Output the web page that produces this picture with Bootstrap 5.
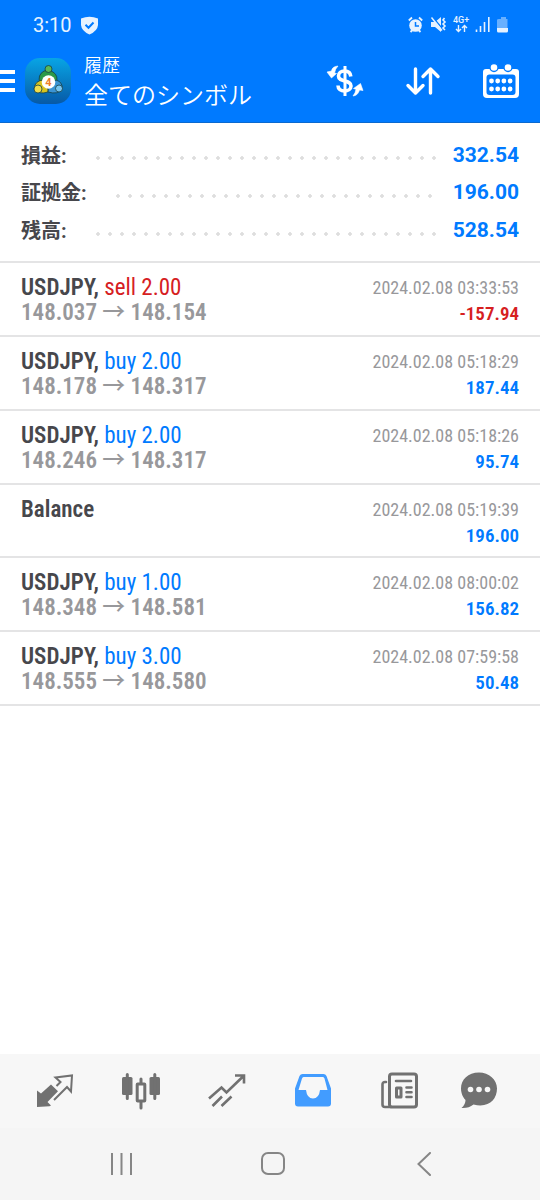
<!DOCTYPE html>
<html lang="ja">
<head>
<meta charset="utf-8">
<meta name="viewport" content="width=device-width, initial-scale=1">
<title>履歴</title>
<link href="https://cdn.jsdelivr.net/npm/bootstrap@5.3.0/dist/css/bootstrap.min.css" rel="stylesheet">
<style>
:root { --brand: #007aff; --ink: #47474c; --muted: #98989b; --rule: #e4e4e5; --loss: #d6201f; }
body { font-family: Roboto, "Noto Sans CJK JP", sans-serif; color: var(--ink); background: #fff; }
svg { display: block; }
.top-area { background: var(--brand); border-bottom: 1px solid #0b69cf; }
.status-row { height: 48px; padding: 2px 32px 0 33px; font-size: 20px; color: #e6f2ff; }
.app-row { height: 74px; padding-bottom: 8px; }
.app-row button, .tab-row a, .system-row button { background: none; border: 0; padding: 0; }
.title-block { padding: 4px 0 0 11px; font-weight: 350; }
.title-small { font-size: 18px; line-height: 26px; }
.title-large { font-size: 24px; line-height: 34px; }
.tool-button { width: 78px; height: 66px; }
.summary-box { padding: 14px 21px 11px; border-bottom: 2px solid var(--rule); }
.summary-line { height: 37px; font-size: 20px; font-weight: 700; }
.summary-line + .summary-line { height: 38px; }
.leader-dots { height: 4px; margin: 5px 15px 0 29px; background: radial-gradient(circle at 2px 2px, #dedede 1px, #e6e6e6 2px, transparent 2px) 0 0 / 12px 4px repeat-x; }
.summary-value { color: var(--brand); font-size: 21px; }
.deal-row { height: 74px; padding: 12px 21px 8px; border-bottom: 2px solid var(--rule); font-family: "Roboto Condensed", "Noto Sans CJK JP", sans-serif; }
.balance-row { height: 73px; }
.deal-title { font-size: 23px; line-height: 25px; font-weight: 600; }
.deal-title span { font-weight: 400; }
.deal-price { font-size: 23px; line-height: 25px; font-weight: 600; color: var(--muted); }
.deal-price span { font-weight: 500; line-height: 1; }
.deal-time { font-size: 18px; line-height: 26px; color: var(--muted); }
.deal-amount { font-size: 19px; line-height: 26px; font-weight: 600; }
.is-buy { color: var(--brand); }
.is-sell { color: var(--loss); }
.tab-row { height: 74px; padding: 0 24px 0 12px; background: #f7f7f7; color: #717171; }
.tab-row a { flex: 86 1 0; color: inherit; }
.tab-row a:last-child { flex-grow: 74; }
.tab-row a.active { color: #429cff; }
.system-row { height: 72px; background: #f5f5f5; color: #868686; padding: 0 40px 0 46px; }
.system-row button { color: inherit; flex: 1 1 0; }
</style>
</head>
<body>
<div class="d-flex flex-column min-vh-100">
<header class="top-area text-white">
  <div class="status-row d-flex align-items-center justify-content-between">
    <div class="d-flex align-items-center gap-2">
      <span>3:10</span>
      <svg width="19" height="19" viewBox="0 0 19 19"><path d="M1 2.500Q9.500-.8 18 2.500V9Q17.500 15 9.500 18.500 1.500 15 1 9Z" fill="#e6f2ff"/><path d="M5.500 8.800l3 3 5-5.300" fill="none" stroke="#007aff" stroke-width="2"/></svg>
    </div>
    <svg width="100" height="18" viewBox="0 0 100 18" fill="#e6f2ff" stroke="none">
      <circle cx="7.500" cy="9.500" r="6.300"/><path d="M7.500 6v4h3.500" fill="none" stroke="#007aff" stroke-width="1.500"/><path d="M.8 4.500L4 1.500M14.200 4.500L11 1.500M2.500 16l2-2M12.500 16l-2-2" stroke="#e6f2ff" stroke-width="1.800"/>
      <path d="M23 6h4l6-5v15l-6-5h-4z"/><path d="M24.500 1l11 13" stroke="#007aff" stroke-width="1.500"/><path d="M23.500 1.500l10.500 13" stroke="#e6f2ff" stroke-width="1.500"/><path d="M36.500 2l-1.500 2 2 2-2 2 2 2-2 2 2 2" fill="none" stroke="#e6f2ff" stroke-width="1.600"/>
      <text x="45" y="7" font-size="9" font-weight="500">4G+</text>
      <path d="M50.500 9v6.500M48 13l2.500 2.500L53 13M56.500 16V9.500M54 12l2.500-2.500L59 12" fill="none" stroke="#e6f2ff" stroke-width="1.400"/>
      <path d="M68.500 13.500v2.500M72.500 10v6M76.500 6v10M80.800 1v15" stroke="#e6f2ff" stroke-width="1.600"/>
      <path d="M91 3h2V1h5v2h1.500v10H89V4q0-1 2-1z" opacity=".45"/><path d="M89 12h11v3q0 1.500-1.500 1.500h-8Q89 16.500 89 15z"/>
    </svg>
  </div>
  <div class="app-row d-flex align-items-center">
    <button type="button" aria-label="メニュー" class="text-white"><svg width="15" height="22" viewBox="0 0 15 22"><path d="M0 2h15M0 11h15M0 20h15" stroke="currentColor" stroke-width="4"/></svg></button>
    <svg class="ms-2" width="50" height="50" viewBox="0 0 50 50">
      <defs><linearGradient id="tile" x2="0" y2="1"><stop stop-color="#08a5e5"/><stop offset="1" stop-color="#0759a6"/></linearGradient></defs>
      <rect x="2" y="2" width="46" height="46" rx="15" fill="url(#tile)"/>
      <g stroke="#173f45" stroke-width=".8"><path d="M17 27q-3-8 4-12 5-2 9 1 6 4 3 11z" fill="#2c9a49"/><circle cx="25.500" cy="13" r="3.500" fill="#5ab957"/><path d="M11 33q1-9 10-9 5 9 4 12-9 3-14-3z" fill="#d6c31f"/><circle cx="15" cy="33" r="4" fill="#f1dc4a"/><path d="M25 36q0-9 8-12 7 2 6 9-4 6-14 3z" fill="#3b94d4"/><circle cx="36" cy="32.500" r="3.500" fill="#79c5ef"/></g>
      <circle cx="25.500" cy="26" r="6.800" fill="#fff"/><text x="25.500" y="30" font-size="11" font-weight="700" text-anchor="middle" fill="#ee7d29">4</text>
    </svg>
    <div class="title-block flex-grow-1 text-nowrap"><div class="title-small">履歴</div><div class="title-large">全てのシンボル</div></div>
    <button type="button" aria-label="通貨" class="tool-button d-flex justify-content-center align-items-center text-white">
      <svg width="38" height="32" viewBox="0 0 38 32" fill="none" stroke="currentColor"><path d="M19 1v30" stroke-width="3"/><path d="M24.800 11.500C24.500 7.500 21.500 6 18.500 6 15 6 12.500 8 12.500 11c0 7 12.500 3 12.500 10 0 3-3 5-6.500 5s-6.500-2-6.500-5.500" stroke-width="3.600"/><path d="M12 1Q6 1.500 5.500 6L1 7 5.500 13 10.500 8.500 8.500 8Q9 4 12 1zM27 31q5-.5 6.500-6l3.500.5-2.500-7-7 5 2.500.8q-.5 3.500-3 6.700z" fill="currentColor" stroke-width=".6"/></svg>
    </button>
    <button type="button" aria-label="並べ替え" class="tool-button d-flex justify-content-center align-items-center text-white">
      <svg width="36" height="30" viewBox="0 0 36 30" fill="none" stroke="currentColor" stroke-width="3.400" stroke-linecap="round" stroke-linejoin="round"><path d="M10.500 3v24M3 19.500l7.500 7.500 7.500-7.500M25.500 27V3M18 10.500L25.500 3l7.500 7.500"/></svg>
    </button>
    <button type="button" aria-label="期間" class="tool-button d-flex justify-content-center align-items-center text-white">
      <svg width="36" height="36" viewBox="0 0 36 36"><path d="M3 6h30q3 0 3 3v22q0 4-4 4H4q-4 0-4-4V9q0-3 3-3z" fill="currentColor"/><rect x="3.500" y="11.500" width="29" height="20.500" rx="3" fill="#007aff"/><g fill="currentColor" stroke="#007aff" stroke-width="1.400"><circle cx="11" cy="4.500" r="4"/><circle cx="25" cy="4.500" r="4"/></g><path d="M8.500 18h20M8.500 26h20" stroke="currentColor" stroke-width="4.800" stroke-linecap="round" stroke-dasharray="0 6.200"/></svg>
    </button>
  </div>
</header>

<main>
  <section class="summary-box">
    <div class="summary-line d-flex align-items-center"><span>損益:</span><span class="leader-dots flex-grow-1"></span><span class="summary-value">332.54</span></div>
    <div class="summary-line d-flex align-items-center"><span>証拠金:</span><span class="leader-dots flex-grow-1"></span><span class="summary-value">196.00</span></div>
    <div class="summary-line d-flex align-items-center"><span>残高:</span><span class="leader-dots flex-grow-1"></span><span class="summary-value">528.54</span></div>
  </section>
  <ul class="list-unstyled mb-0">
    <li class="deal-row d-flex justify-content-between"><div><div class="deal-title">USDJPY, <span class="is-sell">sell 2.00</span></div><div class="deal-price">148.037 <span>→</span> 148.154</div></div><div class="text-end"><div class="deal-time">2024.02.08 03:33:53</div><div class="deal-amount is-sell">-157.94</div></div></li>
    <li class="deal-row d-flex justify-content-between"><div><div class="deal-title">USDJPY, <span class="is-buy">buy 2.00</span></div><div class="deal-price">148.178 <span>→</span> 148.317</div></div><div class="text-end"><div class="deal-time">2024.02.08 05:18:29</div><div class="deal-amount is-buy">187.44</div></div></li>
    <li class="deal-row d-flex justify-content-between"><div><div class="deal-title">USDJPY, <span class="is-buy">buy 2.00</span></div><div class="deal-price">148.246 <span>→</span> 148.317</div></div><div class="text-end"><div class="deal-time">2024.02.08 05:18:26</div><div class="deal-amount is-buy">95.74</div></div></li>
    <li class="deal-row balance-row d-flex justify-content-between"><div class="deal-title">Balance</div><div class="text-end"><div class="deal-time">2024.02.08 05:19:39</div><div class="deal-amount is-buy">196.00</div></div></li>
    <li class="deal-row d-flex justify-content-between"><div><div class="deal-title">USDJPY, <span class="is-buy">buy 1.00</span></div><div class="deal-price">148.348 <span>→</span> 148.581</div></div><div class="text-end"><div class="deal-time">2024.02.08 08:00:02</div><div class="deal-amount is-buy">156.82</div></div></li>
    <li class="deal-row d-flex justify-content-between"><div><div class="deal-title">USDJPY, <span class="is-buy">buy 3.00</span></div><div class="deal-price">148.555 <span>→</span> 148.580</div></div><div class="text-end"><div class="deal-time">2024.02.08 07:59:58</div><div class="deal-amount is-buy">50.48</div></div></li>
  </ul>
</main>

<footer class="mt-auto">
  <nav class="tab-row d-flex align-items-center">
    <a href="#quotes" aria-label="気配値" class="d-flex justify-content-center"><svg width="38" height="38" viewBox="0 0 38 38"><path d="M1 18.500l4 3L15 12.500l7 6.800L11.500 30l3.500 3.500-1.500.8L1 35z" fill="currentColor"/><path d="M20.500 14l4-4L19.500 5.500l16.500-2-1 16-4-4.500L18 28" fill="none" stroke="currentColor" stroke-width="2"/></svg></a>
    <a href="#chart" aria-label="チャート" class="d-flex justify-content-center"><svg width="38" height="38" viewBox="0 0 38 38"><g fill="currentColor"><rect x="0" y="5" width="10.500" height="18" rx="1.500"/><rect x="27.500" y="5" width="10.500" height="18" rx="1.500"/></g><g stroke="currentColor" stroke-width="3" stroke-linecap="round" fill="none"><path d="M5.300 2.500v24M32.800 2.500v24M19 7v4M19 30v6"/><rect x="15.200" y="12" width="7.600" height="17" rx=".5"/></g></svg></a>
    <a href="#trade" aria-label="トレード" class="d-flex justify-content-center"><svg width="38" height="38" viewBox="0 0 38 38" fill="none" stroke="currentColor" stroke-width="2.600"><path d="M1 26.500L13.500 15.500l5 5L35 4.500M27 3.500h9v8M4.500 34l9.500-9.500M13.500 34l10-9.500"/></svg></a>
    <a href="#history" aria-label="履歴" class="active d-flex justify-content-center"><svg width="38" height="38" viewBox="0 0 38 38"><path fill="currentColor" fill-rule="evenodd" d="M8.500 2h21q2 0 3 2L37 16.500v15q0 3-3 3H4q-3 0-3-3v-15L5.500 4q1-2 3-2zM9.500 5q-1 0-1.500 1.500L4.500 18H12q1 8.500 7 8.500t7-8.500h7.500l-3-11.500Q30 5 29 5z"/></svg></a>
    <a href="#news" aria-label="ニュース" class="d-flex justify-content-center"><svg width="38" height="38" viewBox="0 0 38 38" fill="none" stroke="currentColor" stroke-width="3"><rect x="9.500" y="2" width="27" height="33" rx="2.500"/><path d="M6 10H5Q2.500 10 2.500 12.500v20Q2.500 35 5 35h6M16 9h15M26.500 15.500h5M26.500 20.200h5M26.500 25h5" stroke-linecap="round" stroke-width="2.600"/><rect x="16.500" y="16" width="4.500" height="9" stroke-linejoin="round"/></svg></a>
    <a href="#messages" aria-label="メッセージ" class="d-flex justify-content-center"><svg width="38" height="38" viewBox="0 0 38 38"><path d="M19 .5C8 .5 1 7.500 1 16.500c0 6 3 10 4.500 11.500Q5.500 32.500 1.500 36q7 .5 12-3.500c15 4 23.500-5 23.500-16C37 7.500 29 .5 19 .5z" fill="currentColor"/><g fill="#f7f7f7"><circle cx="10.500" cy="17.500" r="2.800"/><circle cx="19" cy="17.500" r="2.800"/><circle cx="27.500" cy="17.500" r="2.800"/></g></svg></a>
  </nav>
  <div class="system-row d-flex align-items-center">
    <button type="button" aria-label="最近のアプリ" class="d-flex justify-content-center"><svg width="24" height="24" viewBox="0 0 24 24"><path d="M2 1v22M11.500 1v22M21 1v22" stroke="currentColor" stroke-width="2"/></svg></button>
    <button type="button" aria-label="ホーム" class="d-flex justify-content-center"><svg width="24" height="24" viewBox="0 0 24 24"><rect x="1" y="1" width="22" height="21" rx="6" fill="none" stroke="currentColor" stroke-width="2"/></svg></button>
    <button type="button" aria-label="戻る" class="d-flex justify-content-center"><svg width="24" height="24" viewBox="0 0 24 24"><path d="M18 1L6.500 12 18 23" fill="none" stroke="currentColor" stroke-width="2" stroke-linecap="round"/></svg></button>
  </div>
</footer>
</div>
<script src="https://cdn.jsdelivr.net/npm/bootstrap@5.3.0/dist/js/bootstrap.bundle.min.js"></script>
</body>
</html>
